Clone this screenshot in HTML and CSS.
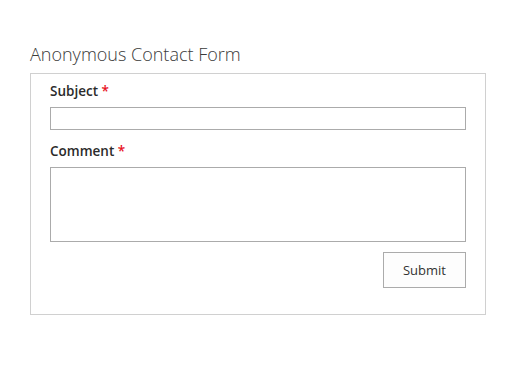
FILE: index.html
```html
<!DOCTYPE html>
<html lang="en">
<head>
  <meta charset="UTF-8" />
  <title>Anonymous Contact Form</title>
  <link rel="stylesheet" href="styles.css">
</head>
<body>
  <div class="page">
    <h1 class="form-title">Anonymous Contact Form</h1>
    <form class="contact-form" onsubmit="return false;">
      <div class="field">
        <label class="field-label" for="subject">Subject <span class="required">*</span></label>
        <input class="field-input" id="subject" type="text" />
      </div>
      <div class="field">
        <label class="field-label" for="comment">Comment <span class="required">*</span></label>
        <textarea class="field-textarea" id="comment"></textarea>
      </div>
      <div class="form-actions">
        <button class="btn" type="submit">Submit</button>
      </div>
    </form>
  </div>
</body>
</html>
```

FILE: styles.css
```css
:root {
  --text-primary: #333333;
  --text-title: #3a3a3a;
  --required: #e81123;
  --border-form: #d0d0d0;
  --border-input: #ababab;
  --font-primary: 'Open Sans', 'Noto Sans', sans-serif;
}
body {
  margin: 0;
  background: #ffffff;
  font-family: var(--font-primary);
  color: var(--text-primary);
}
.page {
  padding: 41px 26px 0 30px;
  width: 456px;
}
.form-title {
  margin: 0 0 6px;
  font-size: 18px;
  font-weight: 300;
  color: var(--text-title);
  line-height: 26px;
}
.contact-form {
  border: 1px solid var(--border-form);
  padding: 6px 19px 26px 19px;
}
.field {
  display: flex;
  flex-direction: column;
  margin-bottom: 10px;
}
.field-label {
  font-size: 13.5px;
  font-weight: 600;
  line-height: 20px;
  padding-top: 1px;
  margin-bottom: 6px;
  color: #2b2b2b;
}
.required {
  color: var(--required);
}
.field-input,
.field-textarea {
  display: block;
  box-sizing: border-box;
  width: 416px;
  border: 1px solid var(--border-input);
  margin: 0;
  padding: 2px 4px;
  font-family: var(--font-primary);
  background: #ffffff;
}
.field-input {
  height: 23px;
}
.field-textarea {
  height: 75px;
  resize: none;
}
.form-actions {
  display: flex;
  justify-content: flex-end;
}
.btn {
  display: block;
  box-sizing: border-box;
  width: 83px;
  height: 36px;
  margin: 0;
  border: 1px solid var(--border-input);
  background: #fdfdfd;
  color: var(--text-primary);
  font-family: var(--font-primary);
  font-size: 13px;
  cursor: pointer;
}
```
